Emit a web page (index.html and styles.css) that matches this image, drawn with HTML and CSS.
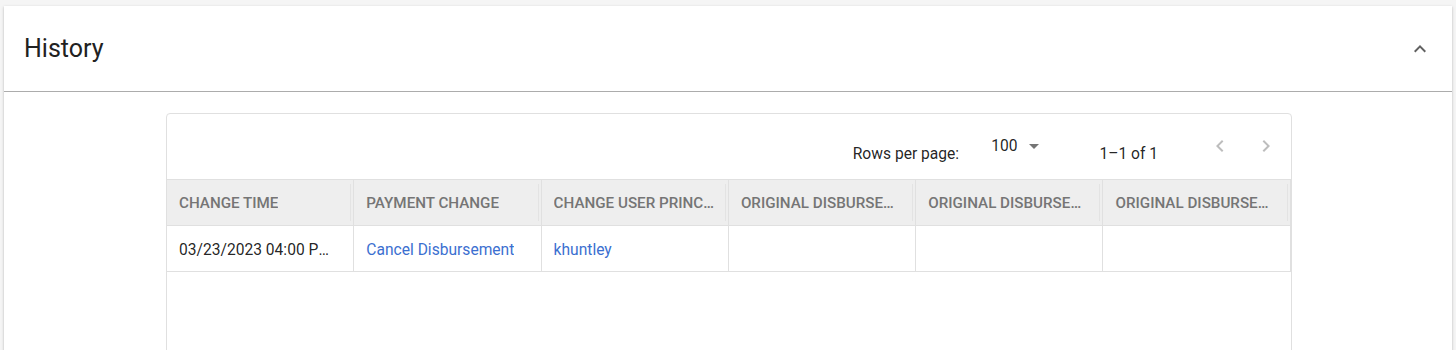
FILE: index.html
```html
<!DOCTYPE html>
<html lang="en">
<head>
<meta charset="utf-8">
<title>History</title>
<link rel="stylesheet" href="styles.css">
</head>
<body>
<section class="panel">
  <header class="panel-header">
    <h2 class="panel-title">History</h2>
    <button class="collapse-btn" aria-label="Collapse">
      <svg width="24" height="24" viewBox="0 0 24 24"><path d="M7.41 15.41 12 10.83l4.59 4.58L18 14l-6-6-6 6z" fill="#616161"/></svg>
    </button>
  </header>
  <div class="panel-body">
    <div class="grid">
      <div class="toolbar">
        <span class="rows-label">Rows per page:</span>
        <span class="rows-select">100
          <svg class="select-arrow" width="24" height="24" viewBox="0 0 24 24"><path d="M7 10l5 5 5-5z" fill="#757575"/></svg>
        </span>
        <span class="displayed">1–1 of 1</span>
        <span class="actions">
          <button class="page-btn" aria-label="Previous page"><svg width="24" height="24" viewBox="0 0 24 24"><path d="M15.41 7.41 14 6l-6 6 6 6 1.41-1.41L10.83 12z" fill="#bdbdbd"/></svg></button>
          <button class="page-btn" aria-label="Next page"><svg width="24" height="24" viewBox="0 0 24 24"><path d="M10 6 8.59 7.41 13.17 12l-4.58 4.59L10 18l6-6z" fill="#bdbdbd"/></svg></button>
        </span>
      </div>
      <div class="row head-row">
        <div class="cell head"><span class="clip">CHANGE TIME</span></div>
        <div class="cell head"><span class="clip">PAYMENT CHANGE</span></div>
        <div class="cell head"><span class="clip">CHANGE USER PRINCIPAL</span></div>
        <div class="cell head"><span class="clip">ORIGINAL DISBURSEMENT AMOUNT</span></div>
        <div class="cell head"><span class="clip">ORIGINAL DISBURSEMENT DATE</span></div>
        <div class="cell head"><span class="clip">ORIGINAL DISBURSEMENT METHOD</span></div>
      </div>
      <div class="row data-row">
        <div class="cell"><span class="clip">03/23/2023 04:00 PM EDT</span></div>
        <div class="cell"><a class="link clip" href="#">Cancel Disbursement</a></div>
        <div class="cell"><a class="link clip" href="#">khuntley</a></div>
        <div class="cell"></div>
        <div class="cell"></div>
        <div class="cell"></div>
      </div>
    </div>
  </div>
</section>
</body>
</html>
```

FILE: styles.css
```css
* { box-sizing: border-box; }
html, body { margin: 0; }
body {
  background: #f5f5f5;
  padding: 6px 4px 0 4px;
  font-family: Roboto, "Liberation Sans", Arial, sans-serif;
  color: rgba(0,0,0,0.87);
  overflow: hidden;
}
.panel {
  background: #fff;
  box-shadow: 0 1px 3px rgba(0,0,0,0.2), 0 1px 1px rgba(0,0,0,0.12);
  height: 400px;
}
.panel-header {
  height: 86px;
  display: flex;
  align-items: center;
  justify-content: space-between;
  padding: 0 20px 0 20px;
  border-bottom: 1px solid #acacac;
}
.panel-title {
  margin: 0;
  font-size: 25px;
  font-weight: 400;
  color: #212121;
}
.collapse-btn {
  border: 0;
  background: none;
  padding: 0;
  width: 24px;
  height: 24px;
  display: flex;
}
.panel-body {
  padding: 21px 160px 0 162px;
}
.grid {
  border: 1px solid #e0e0e0;
  border-radius: 4px;
  height: 280px;
  overflow: hidden;
}
.toolbar {
  height: 66px;
  display: flex;
  align-items: center;
  justify-content: flex-end;
  font-size: 15.6px;
  border-bottom: 1px solid #e0e0e0;
  padding-right: 5px;
}
.rows-label, .displayed {
  padding-top: 14px;
}
.rows-select {
  display: flex;
  align-items: center;
  margin-left: 32px;
  margin-top: -1px;
}
.select-arrow { margin-left: 5px; }
.displayed { margin-left: 53px; }
.actions {
  display: flex;
  margin-left: 42px;
  gap: 6px;
  margin-top: -2px;
}
.page-btn {
  border: 0;
  background: none;
  width: 40px;
  height: 40px;
  padding: 8px;
  display: flex;
  align-items: center;
  justify-content: center;
}
.row {
  display: grid;
  grid-template-columns: repeat(6, 187.3px);
}
.head-row {
  background: #eeeeee;
  height: 46px;
  border-bottom: 1px solid #e0e0e0;
}
.data-row {
  height: 46px;
  border-bottom: 1px solid #e0e0e0;
}
.cell {
  padding: 0 12px;
  display: flex;
  align-items: center;
  border-right: 1px solid #e0e0e0;
  font-size: 15.6px;
  min-width: 0;
}
.clip {
  display: block;
  white-space: nowrap;
  overflow: hidden;
  text-overflow: ellipsis;
  min-width: 0;
}
.data-row .cell { padding-top: 3px; }
.head {
  position: relative;
  color: #757575;
  font-weight: 500;
  font-size: 15.2px;
  padding-right: 11px;
}
.head::after {
  content: "";
  position: absolute;
  right: 2px;
  top: 4px;
  bottom: 4px;
  width: 1px;
  background: #e3e3e3;
}
.link {
  color: #3b6fd0;
  text-decoration: none;
}
```
